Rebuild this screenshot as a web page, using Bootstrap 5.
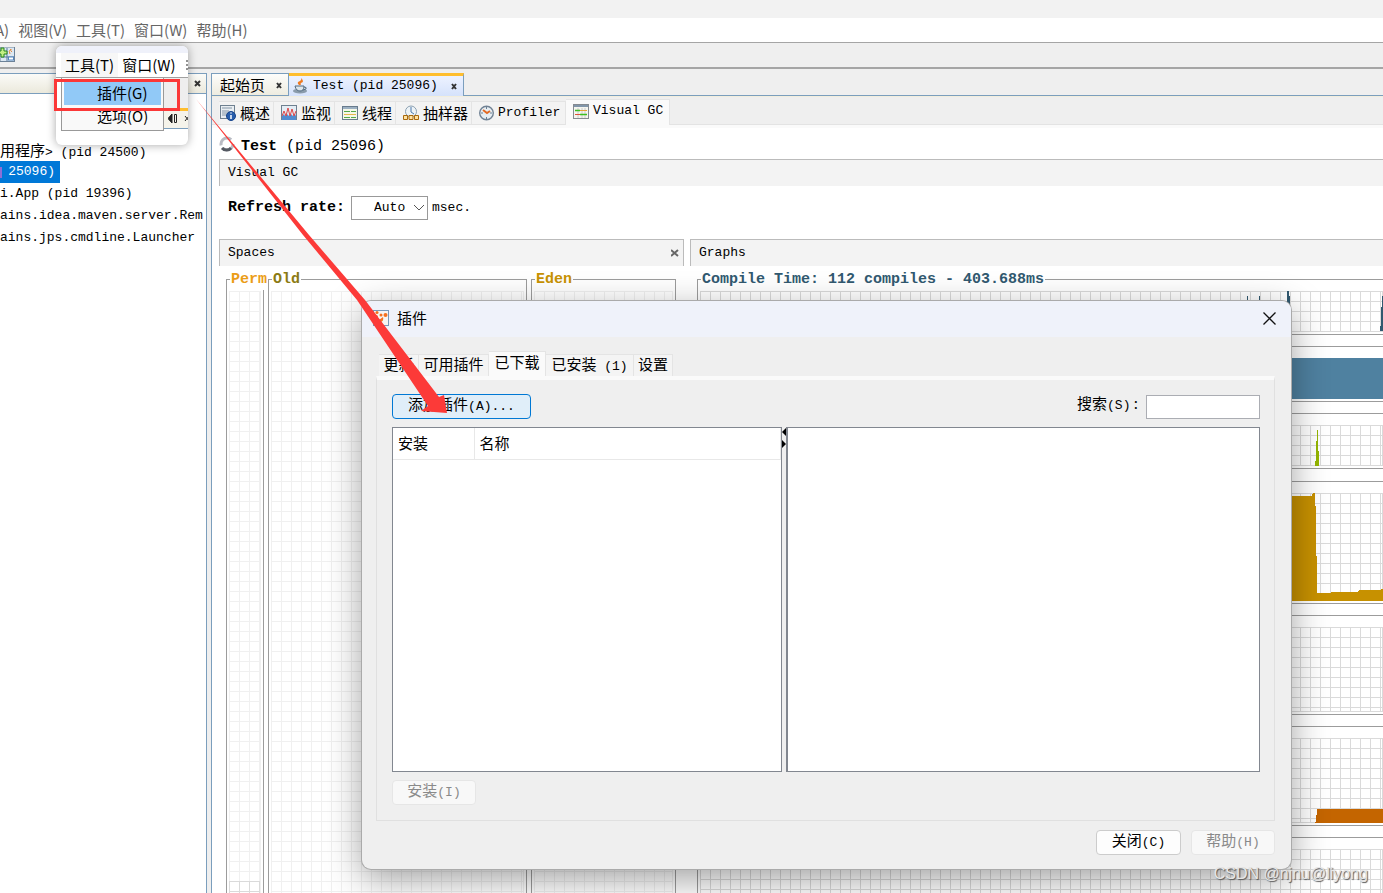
<!DOCTYPE html>
<html lang="zh-CN">
<head>
<meta charset="utf-8">
<meta name="viewport" content="width=device-width, initial-scale=1">
<title>VisualVM</title>
<link href="https://cdn.jsdelivr.net/npm/bootstrap@5.3.0/dist/css/bootstrap.min.css" rel="stylesheet">
<style>
body{font:13px/20px "Liberation Mono","Noto Sans CJK SC",monospace;color:#000;background:#efefef;height:100vh;overflow:hidden}
button,input,select{font:inherit;color:inherit}
a{color:inherit;text-decoration:none}
svg{display:block;flex:none}
.zh{font-family:"Noto Sans CJK SC",sans-serif;font-size:15px}
.ui{font-family:"Noto Sans CJK SC",sans-serif;font-size:15px;line-height:24px}
.strip{height:18px;background:#f2f2f2;flex:none}
.menubar{height:25px;background:#fff;color:#666;gap:9px;border-bottom:1px solid #a5a5a5;flex:none;margin-left:-5px}
.toolbar{height:26px;border-bottom:2px solid #a5a5a5;flex:none}
.side{width:207px;border-right:1px solid #7b9ebd;margin-top:4px;background:#fff}
.side-head{height:21px;background:linear-gradient(#fbfbf8,#ebe9dc);border-top:1px solid #7b9ebd;border-bottom:1px solid #7b9ebd}
.xb{border:0;background:none;padding:0;width:8px;height:8px}
.tree{padding-top:45px}
.tree a{display:block;height:22px;line-height:22px}
.tree .sel{width:60px;padding-right:5px;background:#0078d7;color:#fff;display:flex;align-items:center}
.tick{width:2px;height:11px;background:#8d6fd6}
.work{margin:4px 0 0 4px;border-left:1px solid #7b9ebd;min-width:0}
.doctabs{height:23px;border-bottom:1px solid #7b9ebd}
.doctab{height:22px;border-top:1px solid #7b9ebd;border-right:1px solid #7b9ebd;background:linear-gradient(#fdfdfb,#eeece0)}
.doctab.on{height:23px;border-top:3px solid #ffbe2e;background:linear-gradient(#edf2ff,#d5e2fb);margin-bottom:-1px}
.subtabs{height:29px;border-top:1px solid #f2eedd;padding-left:7px;border-bottom:1px solid #e3e3e3}
.subtab{height:23px;background:#f3f3f3;border:1px solid #e4e4e4;border-width:1px 1px 0 0;padding-left:7px;gap:4px;white-space:nowrap}
.subtab:first-child{padding-left:1px}
.subtab.on{height:26px;background:#fafafa;margin-bottom:-1px;padding-bottom:3px}
.content-pane{background:#fff;border-top:3px solid #fafafa;min-height:0;padding-left:7px}
.sec{height:27px;line-height:26px;background:#f3f3f3;border:solid #bbb;border-width:1px 0 0 1px;padding-left:8px}
.sec.closed{border-right-width:1px}
.big{font-size:15px}
.rate{width:77px;height:24px;border:1px solid #999;border-radius:0;appearance:none;padding:0 0 0 22px;background:#fff}
.spaces{width:465px}
.box{border:1px solid #9c9c9c;padding:11px 2px 2px;flex:none}
.ttl{width:max-content;height:20px;margin:-21px 0 1px 1px;padding:0 1px;background:#fff;font-size:15px;font-weight:700;position:relative;white-space:nowrap}
.lines{background:repeating-linear-gradient(90deg,var(--g) 0 1px,transparent 1px 10px),repeating-linear-gradient(var(--g) 0 1px,transparent 1px 10px);border:solid var(--g);border-width:0 1px 1px 0}
.pale{--g:#f0f0f0}.dark{--g:#dadada}
.tall{height:660px}
.tall .lines{height:100%}
.tall .used{margin-top:590px}
.graphs{min-width:0;overflow:hidden}
.graphs .box{border-right:0;margin-bottom:11px;padding-right:0}
.g40{height:41px}.g84{height:85px}.g108{height:108px}
.dlg{position:absolute;left:362px;right:92px;top:301px;height:568px;background:#efefef;border-radius:9px;box-shadow:0 0 0 1px #aaa,0 10px 36px rgba(0,0,0,.38)}
.dlg-head{height:36px;background:#eff2fa;border-radius:9px 9px 0 0;padding:0 15px 2px 11px}
.dlg-body{padding:14px 16px 14px 14px;min-height:0}
.dtabs{padding-left:3px}
.dtab{height:22px;background:#f4f4f4;border:1px solid #e4e4e4;border-width:1px 1px 0 0;text-align:center;padding:0 0 3px;white-space:nowrap;line-height:18px}
.dtab.on{height:25px;background:#fafafa;padding-bottom:5px}
.panel{border:1px solid #e0e0e0;border-top:4px solid #fafafa;padding:14px 14px 15px 15px;min-height:0}
.wbtn{height:25px;line-height:18px;border:1px solid #ccc;border-radius:4px;background:#fdfdfd;padding:0 0 4px;width:84px}
.wbtn:disabled{color:#8a8a8a;background:#f8f8f8;border-color:#e6e6e6}
.wbtn.hot{width:139px;border-color:#0078d4;background:#e0eef9}
.find{width:114px;height:24px;border:1px solid #abadb3;background:#fff;padding:0 4px}
.pane{border:1px solid #828790;background:#fff}
.pane th{height:31px;font-weight:400;border:solid #e8e8e8;border-width:0 1px 1px 0;padding:0 0 0 5px}
.pop{position:absolute;left:56px;top:46px;width:132px;height:99px;background:#fff;border-radius:6px;box-shadow:0 0 10px rgba(0,0,0,.35);overflow:hidden}
.pop-top{height:7px;background:#eff1fa}
.pop-bar{height:25px;border-bottom:1px solid #a0a0a0;padding-left:5px;white-space:nowrap;gap:4px}
.pop-menu{width:103px;height:53px;border:1px solid #999;border-top:0;background:#f9f9f9;padding:4px 2px 0;margin-left:5px}
.pop-menu a{display:block;height:23px;line-height:22px;padding-left:33px}
.pop-menu a.act{background:#91c9f7}
.pop-side{height:51px;background:linear-gradient(#eee 0 30px,#ffbe2e 30px 33px,#f5f3ea 33px);border-bottom:1px solid #7b9ebd;padding:36px 0 0 4px}
.hl{position:absolute;left:54px;top:79px;width:126px;height:32px;border:3px solid #fb3838}
.arrow{position:absolute;left:0;top:0;pointer-events:none}
.wm{position:absolute;right:15px;bottom:7px;font:16px/24px "Liberation Sans",sans-serif;color:#e6e6e6;text-shadow:1px 1px 1px #555}
</style>
</head>
<body class="d-flex flex-column">
<div class="strip"></div>
<nav class="menubar ui d-flex"><a href="#">A)</a><a href="#">视图(V)</a><a href="#">工具(T)</a><a href="#">窗口(W)</a><a href="#">帮助(H)</a></nav>
<div class="toolbar pt-1">
<svg width="15" height="15"><rect x="0" y="0" width="14.500" height="14.500" fill="#dce8f3" stroke="#6c8298"/><path d="M7 1v13M1 10h13" stroke="#56799c"/><rect x="8.500" y="10" width="5" height="3" fill="#fff" stroke="#5585bd"/><path d="M10 7q-2-3 1-5q-1 2 1 3" stroke="#e98938" fill="none"/><path d="M1 1h3v3h3v3H4v3H1V7H-1V4H1z" fill="#c3ee84" stroke="#25851c"/></svg></div>
<div class="d-flex flex-fill" style="min-height:0">
<aside class="side flex-shrink-0 overflow-hidden text-nowrap">
<div class="side-head d-flex justify-content-end align-items-center pe-1"><button class="xb" aria-label="关闭侧栏"><svg width="8" height="8"><path d="M1 1l5 5M6 1l-5 5" stroke="#333" stroke-width="2"/></svg></button></div>
<div class="tree"><a href="#"><span class="zh">用程序</span>&gt; (pid 24500)</a><a href="#" class="sel"><i class="tick me-auto"></i>25096)</a><a href="#">i.App (pid 19396)</a><a href="#">ains.idea.maven.server.Rem</a><a href="#">ains.jps.cmdline.Launcher</a></div>
</aside>
<main class="work flex-fill d-flex flex-column">
<div class="doctabs d-flex align-items-start flex-shrink-0">
<div class="doctab d-flex align-items-center zh" style="width:77px"><a href="#" class="ps-2 me-auto">起始页</a><button class="xb me-1" aria-label="关闭起始页"><svg width="8" height="8"><path d="M1 2l4 5M5 2l-4 5" stroke="#333" stroke-width="2"/></svg></button></div>
<div class="doctab on d-flex align-items-center" style="width:175px"><svg class="ms-1 me-1" width="16" height="16"><ellipse cx="7" cy="13" rx="7" ry="2.500" fill="#8b9cab"/><path d="M2 8h9q0 5-4 5T2 8M11 9q3 0 2 2l-3 1" fill="#dce5eb" stroke="#526a80"/><path d="M6 7q-3-3 1-4q2-1 1-3q4 4 0 5q-1 1 0 2z" fill="#ef7a21"/></svg><a href="#" class="me-auto">Test (pid 25096)</a><button class="xb me-1" aria-label="关闭 Test"><svg width="8" height="8"><path d="M1 2l4 5M5 2l-4 5" stroke="#333" stroke-width="2"/></svg></button></div>
</div>
<div class="subtabs d-flex align-items-end flex-shrink-0">
<a href="#" class="subtab d-flex align-items-center zh" style="width:55px"><svg width="16" height="16"><rect x=".5" y=".5" width="14" height="13" fill="#e9eef2" stroke="#6e8090"/><path d="M2 3h10M2 6h7M2 8h6M2 10h5" stroke="#8496a7"/><circle cx="11" cy="11" r="4.500" fill="#285eac" stroke="#16448b"/><path d="M11 10v4M11 7.500v1" stroke="#fff" stroke-width="1.500"/></svg>概述</a>
<a href="#" class="subtab d-flex align-items-center zh" style="width:61px"><svg width="16" height="16"><rect x=".5" y=".5" width="15" height="14" fill="#e4edf5" stroke="#6e8090"/><path d="M1 15v-4l2-2 1 2 2-2 2 2 2-2 2 2 2-2 1 2v4z" fill="#518bcf"/><path d="M1 11l2-5 2 5 2-8 2 8 2-7 2 7 2-5" fill="none" stroke="#df4545"/></svg>监视</a>
<a href="#" class="subtab d-flex align-items-center zh" style="width:61px"><svg width="16" height="16"><rect x=".5" y="1.500" width="15" height="13" fill="#f5f7e8" stroke="#687b8c"/><path d="M1 3h14" stroke="#9cb0c2" stroke-width="2"/><path d="M2 6.500h12M2 12.500h12" stroke="#55a84a" stroke-dasharray="6 1"/><path d="M2 9.500h12" stroke="#e8b74b"/></svg>线程</a>
<a href="#" class="subtab d-flex align-items-center zh" style="width:76px"><svg width="16" height="16"><circle cx="8" cy="6.500" r="5.500" fill="#edf3f7" stroke="#8ba0b1"/><path d="M8 2v5l3 2" stroke="#4b79ac" fill="none"/><path d="M.5 10.500h4v4h-4zM6 10.500h4v4H6zM11.500 10.500h4v4h-4z" fill="#ffe2a0" stroke="#a8680c"/></svg>抽样器</a>
<a href="#" class="subtab d-flex align-items-center" style="width:94px"><svg width="15" height="16"><circle cx="7.500" cy="8" r="6.800" fill="#e7eef3" stroke="#718294" stroke-width="1.400"/><path d="M7.500 2v2M7.500 12v2M2 8h2M11 8h2" stroke="#6d8192"/><path d="M4 5l4 3 3-2" stroke="#e36a24" stroke-width="2" fill="none"/></svg>Profiler</a>
<a href="#" class="subtab on d-flex align-items-center" style="width:104px"><svg width="16" height="15"><rect x=".5" y=".5" width="15" height="14" fill="#f5f5ef" stroke="#858b91"/><path d="M1 2h14" stroke="#8296aa" stroke-width="2"/><path d="M5 4v10M9 4v10M12 4v10" stroke="#ccc"/><path d="M2 6.500h5M7 10.500h7" stroke="#3dbf20" stroke-width="1.500"/><path d="M7 6.500h7" stroke="#e7a435"/><path d="M2 10.500h5" stroke="#dc5439"/></svg>Visual GC</a>
</div>
<div class="content-pane flex-fill d-flex flex-column">
<div class="d-flex flex-shrink-0" style="height:31px"><svg class="mt-2" width="16" height="16"><circle cx="8" cy="8" r="6" fill="none" stroke="#b9bbc3" stroke-width="3" stroke-dasharray="14 3 15 6"/><path d="M3 12a6 6 0 0 0 9 0" stroke="#555962" stroke-width="3" fill="none"/></svg><h1 class="big m-0 fw-normal" style="line-height:24px;padding:7px 0 0 6px"><b>Test</b> (pid 25096)</h1></div>
<div class="sec flex-shrink-0">Visual GC</div>
<div class="d-flex align-items-center flex-shrink-0 text-nowrap" style="height:43px;padding-left:9px"><label for="rate" class="big fw-bold" style="width:123px">Refresh rate:</label><div class="position-relative"><select id="rate" class="rate"><option>Auto</option></select><svg class="position-absolute end-0 top-50 me-1" width="10" height="6" style="margin-top:-3px"><path d="M0 0l5 5 5-5" fill="none" stroke="#555"/></svg></div><span class="ms-1">msec.</span></div>
<div class="d-flex flex-fill overflow-hidden" style="gap:6px;padding-top:10px">
<section class="spaces flex-shrink-0">
<div class="sec closed d-flex align-items-center justify-content-between">Spaces<button class="xb me-1" aria-label="关闭 Spaces"><svg width="8" height="8"><path d="M0 1l7 6M7 1L0 7" stroke="#666" stroke-width="2"/></svg></button></div>
<div class="d-flex" style="padding:13px 7px 0;gap:4px">
<div class="box tall" style="width:38px"><div class="ttl" style="color:#eb9d17">Perm</div><div class="lines pale overflow-hidden"><div class="lines dark used"></div></div></div>
<div class="box tall" style="width:259px"><div class="ttl" style="color:#8b7b14">Old</div><div class="lines pale"></div></div>
<div class="box tall" style="width:145px"><div class="ttl" style="color:#c89202">Eden</div><div class="lines pale"></div></div>
</div></section>
<section class="graphs flex-fill"><div class="sec">Graphs</div>
<div style="padding:13px 0 0 7px">
<div class="box"><div class="ttl" style="color:#315970">Compile Time: 112 compiles - 403.688ms</div><div class="lines dark g40"><svg width="683" height="40"><path d="M547 5h1v35h-1zM559 5h1v35h-1zM587 0h2v5h1v35h-3zM680 40v-5h1V16h1V5h1v35z" fill="#315970"/></svg></div></div>
<div class="box"><div class="g40" style="background:#4f81a0"></div></div>
<div class="box"><div class="lines dark g40"><svg width="683" height="41"><path d="M615 41v-5h1V16h1V5h1v21h1v15z" fill="#94b500"/></svg></div></div>
<div class="box" style="margin-top:12px"><div class="lines dark g108"><svg width="683" height="108"><path d="M0 3h612V1h1V0h2v13h1v50h1v37h14v-1h27v-1h1v-1h22v-1h3v12H0z" fill="#c79100"/></svg></div></div>
<div class="box"><div class="lines dark g84"></div></div>
<div class="box"><div class="lines dark g84"><svg width="683" height="85"><path d="M615 85v-1h1v-7h1v-6h66v14z" fill="#c46500"/></svg></div></div>
<div class="box"><div class="lines dark g84"></div></div>
</div></section>
</div></div></main></div>

<section class="dlg d-flex flex-column" role="dialog" aria-label="插件">
<div class="dlg-head d-flex align-items-center"><svg width="16" height="16"><rect x=".5" y=".5" width="15" height="15" fill="#f7f5f2" stroke="#7898b7"/><path d="M3 14q0-4 3-4l4-3q1 4-2 5l-2 3z" fill="#f5711d"/><g fill="#f5711d"><circle cx="4" cy="2.500" r="1.500"/><circle cx="3" cy="7" r="2"/><circle cx="8" cy="5" r="1.500"/><circle cx="12.500" cy="5" r="2"/></g></svg><span class="zh ms-2 me-auto">插件</span><button class="xb" style="width:13px;height:13px" aria-label="关闭"><svg width="13" height="13"><path d="M.5.5l12 12M12.500.5l-12 12" stroke="#111" stroke-width="1.300"/></svg></button></div>
<div class="dlg-body flex-fill d-flex flex-column">
<div class="dtabs d-flex align-items-end flex-shrink-0"><button class="dtab zh" style="width:40px">更新</button><button class="dtab zh" style="width:70px">可用插件</button><button class="dtab on zh" style="width:57px">已下载</button><button class="dtab" style="width:88px"><span class="zh">已安装</span> (1)</button><button class="dtab zh" style="width:39px">设置</button></div>
<div class="panel flex-fill d-flex flex-column">
<div class="d-flex align-items-center" style="height:25px"><button class="wbtn hot"><span class="zh">添加插件</span>(A)...</button><label for="find" class="ms-auto me-2 pb-1"><span class="zh">搜索</span>(S)<span class="zh"> :</span></label><input id="find" class="find"></div>
<div class="d-flex flex-fill" style="margin-top:8px"><div class="pane" style="width:390px"><table class="w-100 zh"><thead><tr><th style="width:81px">安装</th><th>名称</th></tr></thead></table></div><svg width="4" height="24"><path d="M4 1v8L0 5zM0 13v8l4-4z"/></svg><div class="pane flex-fill" style="border-left-width:2px"></div></div>
<div class="d-flex" style="margin-top:8px"><button class="wbtn" disabled><span class="zh">安装</span>(I)</button></div>
</div>
<div class="d-flex justify-content-end" style="gap:10px;padding-top:9px"><button class="wbtn" style="width:85px"><span class="zh">关闭</span>(C)</button><button class="wbtn" disabled><span class="zh">帮助</span>(H)</button></div>
</div></section>

<div class="pop ui"><div class="pop-top"></div><div class="pop-bar d-flex"><a href="#" style="background:#f7f7f7;padding:0 4px">工具(T)</a><a href="#">窗口(W)</a><svg class="ms-auto" width="2" height="24"><path d="M0 8h2M0 12h2M0 16h2" stroke="#222"/></svg></div><div class="d-flex"><div class="pop-menu flex-shrink-0"><a href="#" class="act">插件(G)</a><a href="#">选项(O)</a></div><div class="pop-side flex-fill"><svg width="20" height="9"><path d="M4 0v9L0 4.500zM17 2l4 5M21 2l-4 5" fill="#222" stroke="#222"/><path d="M6.500.5h2v8h-2z" fill="none" stroke="#222"/></svg></div></div></div>
<div class="hl"></div>
<svg class="arrow" width="460" height="420"><path d="M196 99L309 235L365 300L439 397L444 395L447 413L421 411L428 406L357 300L303 235z" fill="#fc3a38"/></svg>
<div class="wm">CSDN @njnu@liyong</div>
<script src="https://cdn.jsdelivr.net/npm/bootstrap@5.3.0/dist/js/bootstrap.bundle.min.js"></script>
</body>
</html>
